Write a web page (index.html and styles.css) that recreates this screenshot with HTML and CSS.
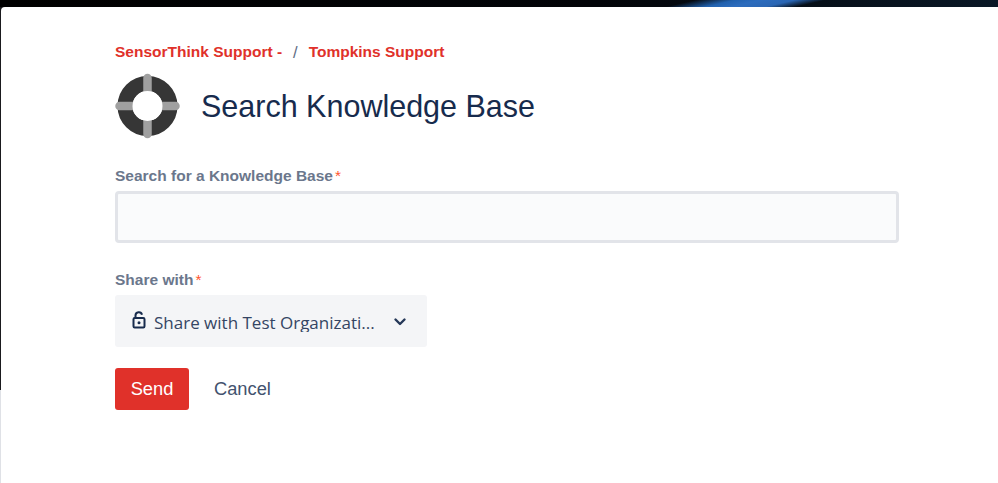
FILE: index.html
```html
<!DOCTYPE html>
<html lang="en">
<head>
<meta charset="utf-8">
<title>Search Knowledge Base</title>
<link rel="stylesheet" href="styles.css">
</head>
<body>
<main class="card">
  <nav class="crumbs">
    <a class="crumb" href="#">SensorThink Support -</a>
    <span class="sep">/</span>
    <a class="crumb" href="#">Tompkins Support</a>
  </nav>
  <header class="title-row">
    <svg class="logo" width="66" height="66" viewBox="0.5 0 66 66" aria-hidden="true">
      <circle cx="33" cy="33" r="22.500" fill="none" stroke="#363636" stroke-width="15"/>
      <path d="M33 5v56M5 33h56" fill="none" stroke="#a0a0a0" stroke-width="8.500" stroke-linecap="round"/>
      <circle cx="33" cy="33" r="15" fill="#fff"/>
    </svg>
    <h1 class="title">Search Knowledge Base</h1>
  </header>
  <form class="form">
    <label class="label label-search" for="kb">Search for a Knowledge Base<span class="req">*</span></label>
    <input class="input" id="kb" type="text">
    <label class="label label-share">Share with<span class="req">*</span></label>
    <div class="select">
      <svg class="lock" width="16" height="20" viewBox="0 0 16 20" aria-hidden="true">
        <path d="M4.500 8V5.500a3.300 3.300 0 0 1 6.500-.8" fill="none" stroke="#172b4d" stroke-width="2"/>
        <rect x="2.500" y="8" width="11" height="9.500" rx="1.200" fill="none" stroke="#172b4d" stroke-width="2"/>
        <circle cx="8" cy="12.700" r="1.500" fill="#172b4d"/>
      </svg>
      <span class="select-text">Share with Test Organizati...</span>
      <svg class="chev" width="14" height="10" viewBox="0 0 14 10" aria-hidden="true">
        <path d="M2.500 2.500 7 7l4.500-4.500" fill="none" stroke="#253858" stroke-width="2.400" stroke-linecap="round" stroke-linejoin="round"/>
      </svg>
    </div>
    <div class="actions">
      <button class="send" type="button">Send</button>
      <a class="cancel" href="#">Cancel</a>
    </div>
  </form>
</main>
</body>
</html>
```
FILE: styles.css
```css
html, body {
  margin: 0;
  height: 100%;
}
body {
  height: 483px;
  overflow: hidden;
  box-sizing: border-box;
  padding: 7px 0 0 1px;
  background:
    linear-gradient(167deg, transparent 67.600%, #2161ae 71.500%, #2c6cbd 74%, #2a66b4 77.300%, transparent 80.300%) top / 100% 7px no-repeat,
    linear-gradient(90deg, #000 0, #020408 60%, #0a1826 100%) top / 100% 7px no-repeat,
    linear-gradient(#1a1a1e 0, #1a1a1e 390px, #dfe1e6 390px);
  font-family: "Liberation Sans", Arial, sans-serif;
}
.card {
  height: 476px;
  box-sizing: border-box;
  background: #fff;
  border-top-left-radius: 4px;
  padding: 36px 99px 0 114px;
}
.crumbs {
  display: flex;
  align-items: center;
  height: 18px;
  font-size: 15.500px;
  font-weight: 700;
  line-height: 18px;
}
.crumb {
  color: #e0312a;
  text-decoration: none;
}
.sep {
  color: #5e6c84;
  font-weight: 400;
  font-size: 16.500px;
  padding: 0 11px 0 11px;
}
.title-row {
  display: flex;
  align-items: center;
  margin-top: 12px;
  height: 66px;
}
.logo {
  flex: none;
}
.title {
  margin: 0 0 0 20px;
  font-size: 30.500px;
  font-weight: 400;
  color: #172b4d;
  line-height: 36px;
}
.form {
  display: flex;
  flex-direction: column;
  align-items: flex-start;
}
.label {
  font-size: 15.500px;
  font-weight: 700;
  line-height: 18px;
  color: #6b778c;
}
.label-search {
  margin-top: 28px;
}
.label-share {
  margin-top: 28px;
}
.req {
  color: #ff5630;
  margin-left: 2px;
  font-weight: 400;
}
.input {
  display: block;
  width: 100%;
  height: 52px;
  box-sizing: border-box;
  margin-top: 6px;
  background: #fafbfc;
  border: 3px solid #e2e4e9;
  border-radius: 4px;
}
.select {
  display: flex;
  align-items: center;
  width: 312px;
  height: 52px;
  box-sizing: border-box;
  margin-top: 6px;
  padding: 0 20px 0 16px;
  background: #f4f5f7;
  border-radius: 3px;
}
.lock {
  flex: none;
  margin-bottom: 2px;
}
.select-text {
  margin: 2px 0 0 7px;
  flex: 1;
  font-family: "Open Sans", "Noto Sans", sans-serif;
  font-size: 17px;
  line-height: 22px;
  height: 20px;
  overflow: hidden;
  color: #344563;
}
.chev {
  flex: none;
  margin-top: 2px;
}
.actions {
  display: flex;
  align-items: center;
  margin-top: 21px;
}
.send {
  width: 74px;
  height: 42px;
  padding: 0;
  border: 0;
  border-radius: 3px;
  background: #e0312a;
  color: #fff;
  font: 400 18.300px "Liberation Sans", Arial, sans-serif;
}
.cancel {
  margin-left: 25px;
  font-size: 18.300px;
  color: #42526e;
  text-decoration: none;
}
```
